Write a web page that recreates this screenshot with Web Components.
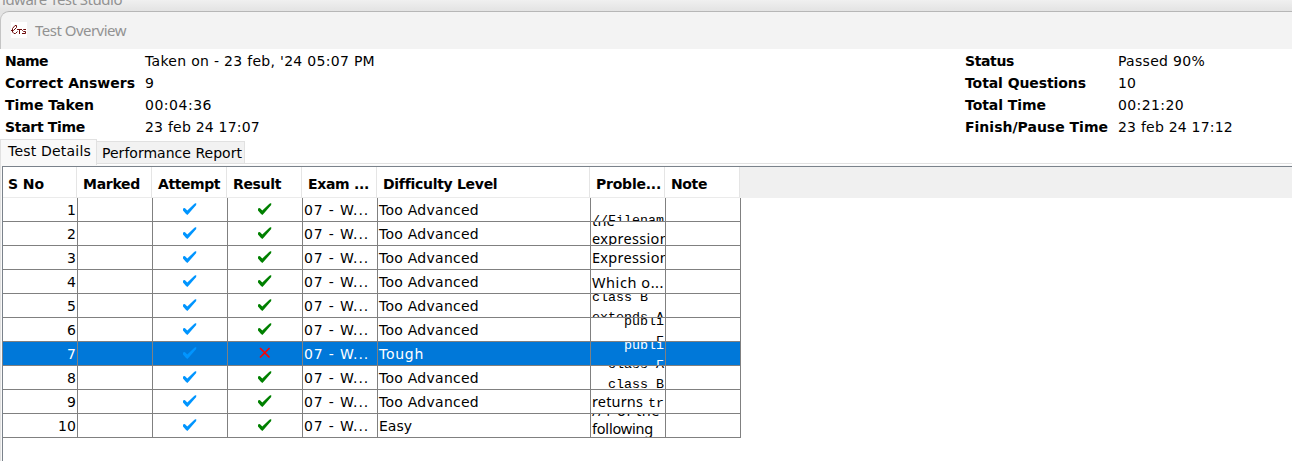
<!DOCTYPE html>
<html lang="en"><head><meta charset="utf-8"><title>Test Overview</title>
<style>html,body{margin:0;height:100%;overflow:hidden;background:#fff}body{font:14px/22px "DejaVu Sans",Verdana,sans-serif;color:#000}</style></head>
<body><test-overview></test-overview>
<script>
class FitText extends HTMLElement{
  connectedCallback(){
    const r=this.attachShadow({mode:'open'});
    r.innerHTML='<style>:host{display:inline-block;white-space:pre}span{display:inline-block}</style><span><slot></slot></span>';
    const s=r.querySelector('span'),w=+this.getAttribute('w'),n=this.textContent.length;
    if(w&&n)s.style.letterSpacing=((w-s.getBoundingClientRect().width)/n)+'px';
  }
}
customElements.define('fit-text',FitText);

class StateMark extends HTMLElement{
  connectedCallback(){
    const k=this.getAttribute('kind');
    const g=k==='cross'?'<path d="M2 1L11.5 10.5M11.5 1L2 10.5" fill="none" stroke="#ff0000" stroke-width="1.7"/>'
      :'<path d="M0 5.5L1.8 5L4.3 7.6L11.4 0.7L13.2 0V2.1L5.8 10.6L4.3 12L2.8 10.8L0 7.5Z" fill="'+(k==='right'?'#008000':'#0095ff')+'"/>';
    this.attachShadow({mode:'open'}).innerHTML='<style>:host{display:block;width:14px;height:12px}svg{display:block}</style><svg width="14" height="12" viewBox="0 0 14 12">'+g+'</svg>';
  }
}
customElements.define('state-mark',StateMark);

class InfoList extends HTMLElement{
  connectedCallback(){
    const rows=JSON.parse(this.getAttribute('rows'));
    this.attachShadow({mode:'open'}).innerHTML='<style>:host{display:grid;grid-template-columns:var(--label) auto;grid-auto-rows:22px;align-content:start;line-height:22px}b{white-space:nowrap}</style>'+
      rows.map(r=>`<b><fit-text w="${r[1]}">${r[0]}</fit-text></b><span><fit-text w="${r[3]}">${r[2]}</fit-text></span>`).join('');
  }
}
customElements.define('info-list',InfoList);

class ProblemCell extends HTMLElement{
  connectedCallback(){
    this.attachShadow({mode:'open'}).innerHTML=`<style>:host{display:block;position:relative;height:23px;overflow:hidden}
    ::slotted(*){position:absolute;white-space:pre;line-height:20px}</style><slot></slot>`;
  }
}
customElements.define('problem-cell',ProblemCell);

const line=(x,base,w,t,mono)=>`<span class="${mono?'m':'s'}" style="left:${x-1}px;top:${base-(mono?13:15)}px"><fit-text w="${w}">${t}</fit-text></span>`;
const problems=[
  line(2,26,72,'//Filenam',1),
  line(2,3,23,'the')+line(2,21,77,'expression'),
  line(2,16,77,'Expression'),
  line(2,17,72,'Which o...'),
  line(2,7,56,'class B',1)+line(2,27,72,'extends A',1),
  line(34,7,40,'publi',1)+line(66,27,8,'F',1),
  line(34,7,40,'publi',1)+line(66,27,8,'F',1),
  line(18,2,56,'class A',1)+line(18,22,56,'class B',1),
  line(2,16,51,'returns')+line(58,17,16,'tr',1),
  line(2,1,68,'//1 of the')+line(2,19,61,'following')
];
class ResultGrid extends HTMLElement{
  connectedCallback(){
    const heads=[['S No',36],['Marked',57],['Attempt',62],['Result',48],['Exam ...',61],['Difficulty Level',113],['Proble...',65],['Note',36]];
    const rows=problems.map((p,i)=>{
      const bad=i===6,lv=bad?['Tough',45]:i===9?['Easy',33]:['Too Advanced',100];
      return `<div class="row${bad?' sel':''}"><div class="no"><fit-text w="${i===9?18:9}">${i+1}</fit-text></div><div></div><div class="i"><state-mark kind="done"></state-mark></div><div class="i"><state-mark kind="${bad?'cross':'right'}"></state-mark></div><div class="t"><fit-text w="65">07 - W...</fit-text></div><div class="t"><fit-text w="${lv[1]}">${lv[0]}</fit-text></div><div><problem-cell>${p}</problem-cell></div><div></div></div>`;
    }).join('');
    this.attachShadow({mode:'open'}).innerHTML=`<style>
    :host{display:block;flex:1;border-top:1px solid #7a828b;border-left:1px solid #7a828b;background:#fff}
    .head{display:grid;height:31px;background:#f0f0f0}
    .head,.row{grid-template-columns:75px 75px 75px 75px 75px 213px 75px 75px}
    .head b{box-sizing:border-box;height:31px;padding-left:5px;line-height:34px;background:#fff;border-right:1px solid #e5e5e5;border-bottom:1px solid #ebebeb;overflow:hidden;white-space:nowrap;position:relative}
    .head{grid-template-columns:74px 75px 75px 75px 75px 213px 75px 75px}
    .head b+b{padding-left:6px}
    .row{display:grid;height:24px;width:738px}
    .row>div{box-sizing:border-box;border-right:1px solid #808080;border-bottom:1px solid #808080;height:24px;line-height:25px;overflow:hidden;white-space:nowrap;min-width:0}
    .row>.no{text-align:right;padding-right:1px}.row>.t{padding-left:1px}
    .row>.i{display:flex;padding:5px 0 0 30px}
    .sel{background:#0078d9;color:#fff}
    .m{font-family:"Liberation Mono",monospace;font-size:13.33px}
    .s{font-family:"Noto Sans",sans-serif;font-size:14.5px}
    </style><div class="head">${heads.map(h=>`<b><fit-text w="${h[1]}">${h[0]}</fit-text></b>`).join('')}</div>${rows}`;
  }
}
customElements.define('result-grid',ResultGrid);

class TestOverview extends HTMLElement{
  connectedCallback(){
    this.attachShadow({mode:'open'}).innerHTML=`<style>
    :host{display:flex;flex-direction:column;height:461px}
    .under{height:11px;flex:none;background:linear-gradient(#f0f0f0,#e3e3e3);overflow:hidden;color:#929292;font:15px/20px "Noto Sans",sans-serif}
    .under div{margin:-11px 0 0 2px;height:22px}
    .title{flex:none;box-sizing:border-box;height:38px;display:flex;align-items:center;background:#f3f3f3;border-top:1px solid #b6b6b6;border-left:1px solid #c4c4c4;border-radius:9px 0 0 0;padding:0 0 2px 10px;color:#929292;font:15px/20px "Noto Sans",sans-serif}
    .back{background:#e3e3e3}
    .title svg{margin-right:8px}
    .info{flex:none;box-sizing:border-box;height:90px;display:flex;padding:1px 0 0 5px}
    .l{--label:140px;width:960px}.r{--label:153px}
    .tabs{flex:none;height:26px;display:flex;align-items:flex-end;background:#fff}
    .tab{box-sizing:border-box;border:1px solid #e1e1e1;white-space:nowrap}
    .a{height:26px;width:97px;background:#f9f9f9;border-bottom:0;padding-left:7px;line-height:23px}
    .b{height:23px;width:148px;background:#f2f2f2;border-left:0;padding-left:5px;line-height:23px;margin-bottom:1px}
    .rest{flex:1;height:1px;background:#e1e1e1;margin-bottom:1px}
    .body{flex:1;display:flex;flex-direction:column;border-left:1px solid #e1e1e1;padding:1px 0 0 1px;background:#f9f9f9}
    </style>
    <div class="under"><div><fit-text w="120">ldware Test Studio</fit-text></div></div>
    <div class="back"><div class="title"><svg width="16" height="16" viewBox="0 0 16 16"><rect width="16" height="16" fill="#fff"/><g fill="none" stroke="#6d0b0b"><path d="M0 8.5H2.5L5.5 5.5V3.5H4L1.5 6.5V10L3 11.5H4.5L6.5 9.5"/><path d="M6 7.5H11M8.5 7.5V12M15 7.5H12.5L11.5 8.5L12.5 9.5H14.5V11.5H11"/></g></svg><fit-text w="91">Test Overview</fit-text></div></div>
    <div class="info"><info-list class="l" rows='[["Name",43,"Taken on - 23 feb, &apos;24 05:07 PM",230],["Correct Answers",130,"9",9],["Time Taken",89,"00:04:36",67],["Start Time",80,"23 feb 24 17:07",115]]'></info-list>
    <info-list class="r" rows='[["Status",49,"Passed 90%",87],["Total Questions",121,"10",18],["Total Time",81,"00:21:20",66],["Finish/Pause Time",143,"23 feb 24 17:12",115]]'></info-list></div>
    <div class="tabs"><div class="tab a"><fit-text w="83">Test Details</fit-text></div><div class="tab b"><fit-text w="140">Performance Report</fit-text></div><div class="rest"></div></div>
    <div class="body"><result-grid></result-grid></div>`;
  }
}
customElements.define('test-overview',TestOverview);
</script></body></html>
